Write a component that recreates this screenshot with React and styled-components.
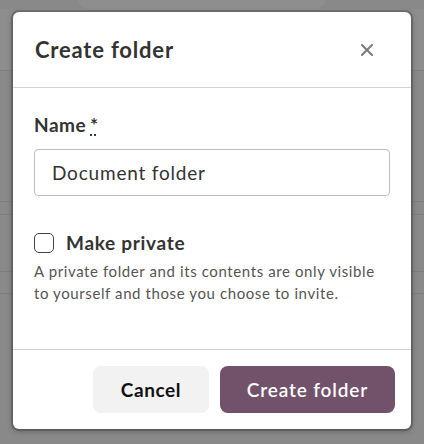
import styled, { createGlobalStyle } from 'styled-components'

const GlobalStyle = createGlobalStyle`
html, body {
  margin: 0;
  padding: 0;
  background: #898989;
}
body {
  font-family: Lato, "Noto Sans", sans-serif;
  width: 424px;
  height: 444px;
  overflow: hidden;
}
`

const Page = styled.div`
position: relative;
width: 424px;
height: 444px;
display: flex;
flex-direction: column;
`
const FauxTab = styled.div`
margin: 0 99px 0 78px;
height: 9px;
border-radius: 0 0 10px 10px;
background: #8e8e8e;
`
const FauxRow = styled.div`
height: ${p => p.$h}px;
border-bottom: 1px solid ${p => p.$line ? '#7e7e7e' : 'transparent'};
background: ${p => p.$light ? '#8d8d8d' : 'transparent'};
`

const Overlay = styled.div`
position: absolute;
inset: 0;
display: flex;
justify-content: center;
padding-top: 12px;
`
const Dialog = styled.div`
width: 398px;
height: 417px;
background: #fff;
border-radius: 6px;
box-shadow: 0 0 0 2px rgba(60, 60, 60, 0.35), 0 2px 6px rgba(0, 0, 0, 0.3);
display: flex;
flex-direction: column;
overflow: hidden;
`
const Header = styled.div`
height: 75px;
display: flex;
align-items: center;
justify-content: space-between;
padding: 0 34px 0 22px;
border-bottom: 1px solid #d2d2d2;
`
const Title = styled.h2`
margin: 0;
font-size: 22px;
font-weight: 700;
color: #333;
letter-spacing: 0.8px;
`
const CloseButton = styled.button`
border: none;
background: none;
padding: 0;
width: 20px;
height: 20px;
display: flex;
align-items: center;
justify-content: center;
cursor: pointer;
`
const Body = styled.div`
flex: 1;
padding: 26px 21px 0 21px;
display: flex;
flex-direction: column;
`
const Label = styled.label`
font-size: 19px;
font-weight: 700;
color: #333;
line-height: 22px;
letter-spacing: 0.5px;
`
const Required = styled.abbr`
text-decoration: underline dotted;
text-underline-offset: 3px;
margin-left: 4px;
`
const Input = styled.input`
margin-top: 13px;
height: 47px;
box-sizing: border-box;
border: 1px solid #bdbdbd;
border-radius: 4px;
padding: 0 17px;
font-family: inherit;
font-size: 19px;
letter-spacing: 0.8px;
color: #333;
outline: none;
`
const CheckRow = styled.label`
margin-top: 35px;
display: flex;
align-items: center;
gap: 12px;
font-size: 19px;
font-weight: 700;
letter-spacing: 0.7px;
color: #333;
`
const Box = styled.span`
width: 18px;
height: 18px;
border: 1.5px solid #444;
border-radius: 5px;
`
const Help = styled.p`
margin: 6px 0 0;
padding-right: 8px;
font-size: 15px;
line-height: 22px;
letter-spacing: 0.6px;
color: #555;
`
const Footer = styled.div`
height: 80px;
border-top: 1px solid #d2d2d2;
display: flex;
justify-content: flex-end;
align-items: flex-start;
gap: 11px;
padding: 16px 16px 0 0;
box-sizing: border-box;
`
const Button = styled.button`
height: 47px;
width: ${p => p.$w}px;
border: none;
border-radius: 8px;
font-family: inherit;
font-size: 19px;
letter-spacing: ${p => p.$primary ? 0.85 : 0.6}px;
font-weight: ${p => p.$primary ? 600 : 700};
color: ${p => p.$primary ? '#fff' : '#111'};
background: ${p => p.$primary ? '#72516b' : '#f2f2f2'};
cursor: pointer;
`

const CloseIcon = () => (
    <svg width="12" height="12" viewBox="0 0 12 12">
        <path d="M1 1 L11 11 M11 1 L1 11" stroke="#7a7a7a" strokeWidth="2" strokeLinecap="square" />
    </svg>
)

const App = () => {
    return (
        <>
            <GlobalStyle />
            <Page>
                <FauxTab />
                <FauxRow $h={61} $line $light />
                <FauxRow $h={130} $line />
                <FauxRow $h={12} $line />
                <FauxRow $h={56} $line />
                <FauxRow $h={21} $line />
                <Overlay>
                    <Dialog>
                        <Header>
                            <Title>Create folder</Title>
                            <CloseButton aria-label="Close"><CloseIcon /></CloseButton>
                        </Header>
                        <Body>
                            <Label>Name<Required title="required">*</Required></Label>
                            <Input defaultValue="Document folder" />
                            <CheckRow>
                                <Box />
                                Make private
                            </CheckRow>
                            <Help>A private folder and its contents are only visible to yourself and those you choose to invite.</Help>
                        </Body>
                        <Footer>
                            <Button $w={116}>Cancel</Button>
                            <Button $w={175} $primary>Create folder</Button>
                        </Footer>
                    </Dialog>
                </Overlay>
            </Page>
        </>
    )
}

export default App
